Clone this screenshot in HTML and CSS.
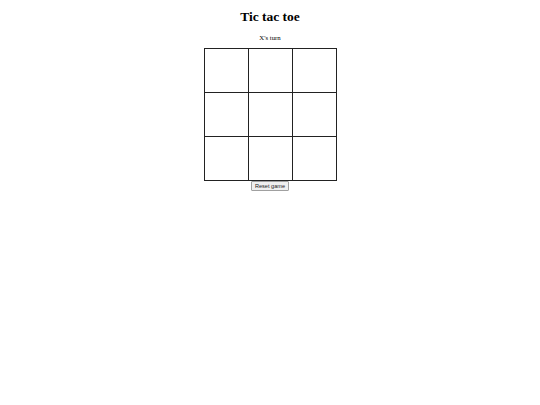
FILE: index.html
```html
<!DOCTYPE html>
<html>
<head>
<meta charset="utf-8">
<link rel="stylesheet" href="styles.css">
</head>
<body>
<div class="game">
  <h1 class="title">Tic tac toe</h1>
  <p class="status">X's turn</p>
  <div class="board">
    <div class="cell"></div><div class="cell"></div><div class="cell"></div>
    <div class="cell"></div><div class="cell"></div><div class="cell"></div>
    <div class="cell"></div><div class="cell"></div><div class="cell"></div>
  </div>
  <button class="reset">Reset game</button>
</div>
</body>
</html>
```
FILE: styles.css
```css
html, body {
  background: #ffffff;
}
body {
  margin: 0 3.4px;
  font-family: "Liberation Serif", "Times New Roman", serif;
  color: #000;
}
.game {
  display: flex;
  flex-direction: column;
  align-items: center;
}
.title {
  font-size: 13.5px;
  font-weight: bold;
  margin: 9px 0;
  line-height: 15.5px;
}
.status {
  font-size: 6.75px;
  line-height: 7.8px;
  margin: 0 0 6.75px;
}
.board {
  display: grid;
  grid-template-columns: repeat(3, 44px);
  grid-template-rows: repeat(3, 44px);
  border-top: 1px solid #222;
  border-left: 1px solid #222;
}
.cell {
  border-right: 1px solid #222;
  border-bottom: 1px solid #222;
}
.reset {
  font-family: "Liberation Sans", Arial, sans-serif;
  font-size: 5.6px;
  line-height: 6.5px;
  padding: 0.5px 2.5px;
  margin: 0;
  background: #efefef;
  border: 1px solid #a0a0a0;
  border-radius: 1px;
  color: #222;
}
```
